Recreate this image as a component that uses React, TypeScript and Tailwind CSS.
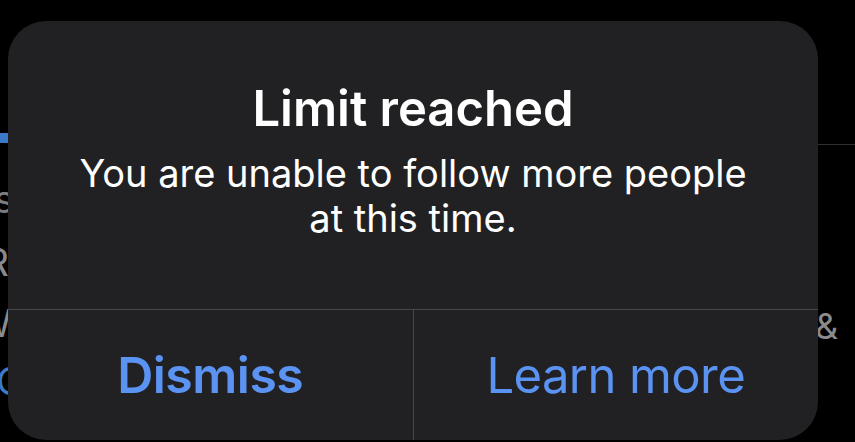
import React from 'react';

const font = { fontFamily: 'Inter, "Noto Sans", sans-serif' };

// Edge of the profile page that peeks out around the dialog
const LeftEdge: React.FC = () => (
  <div className="w-[8px] shrink-0 h-[442px] overflow-hidden flex flex-col">
    <div className="mt-[133px] h-[10px] w-full bg-[#3b79c9]" />
    <div className="mt-[34px] h-[45px] flex justify-end text-[38px] leading-[45px] text-[#7d7d80]">
      <span className="shrink-0 -mr-[6px]">s</span>
    </div>
    <div className="mt-[18px] h-[45px] flex justify-end text-[38px] leading-[45px] text-[#8a8a8d]">
      <span className="shrink-0 -mr-[1px]">R</span>
    </div>
    <div className="mt-[16px] h-[45px] flex justify-end text-[38px] leading-[45px] text-[#8a8a8d]">
      <span className="shrink-0 -mr-[4px]">W</span>
    </div>
    <div className="mt-[13px] h-[45px] flex justify-end text-[38px] leading-[45px] text-[#3b79c9]">
      <span className="shrink-0 -mr-[16px]">C</span>
    </div>
  </div>
);

const RightEdge: React.FC = () => (
  <div className="flex-1 h-[442px] overflow-hidden flex flex-col">
    <div className="mt-[144px] h-px w-full bg-[#2f3033]" />
    <div className="mt-[159px] -ml-[3px] text-[36px] leading-[45px] text-[#8a8a8d]">&amp;</div>
  </div>
);

const LimitAlert: React.FC = () => (
  <div className="mt-[21px] w-[810px] h-[419px] shrink-0 rounded-[38px] bg-[#212123] flex flex-col overflow-hidden">
    <div className="h-[288px] flex flex-col items-center text-white text-center">
      <h2 className="pt-[59px] text-[49px] leading-[58px] font-semibold">Limit reached</h2>
      <p className="mt-[13px] text-[38px] leading-[45px]">
        You are unable to follow more people
        <br />
        at this time.
      </p>
    </div>
    <div className="h-px bg-[#48484b]" />
    <div className="flex-1 flex">
      <button className="flex-1 flex items-center justify-center text-[50px] leading-none font-semibold text-[#5b93f3] tracking-[-0.5px]">
        Dismiss
      </button>
      <div className="w-px bg-[#48484b]" />
      <button className="flex-1 flex items-center justify-center text-[49px] leading-none text-[#5b93f3] tracking-[-0.6px]">
        Learn more
      </button>
    </div>
  </div>
);

export default function App() {
  return (
    <div className="w-[855px] h-[442px] bg-black flex overflow-hidden" style={font}>
      <LeftEdge />
      <LimitAlert />
      <RightEdge />
    </div>
  );
}
